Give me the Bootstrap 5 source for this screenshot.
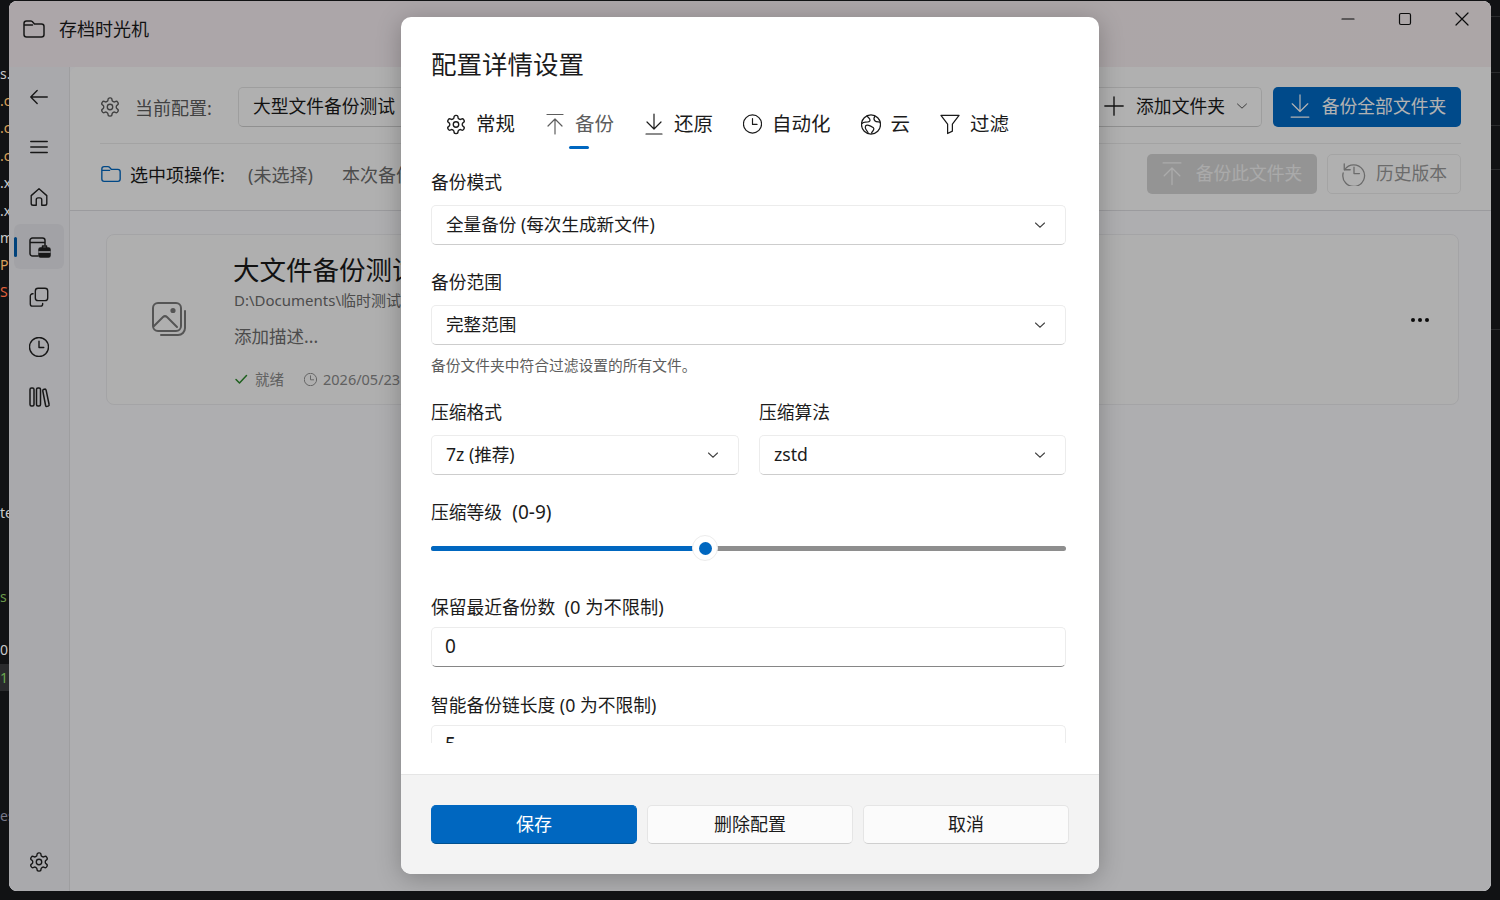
<!DOCTYPE html>
<html lang="zh-CN">
  <head>
    <meta charset="UTF-8" />
    <title>存档时光机</title>
    <link href="https://cdn.jsdelivr.net/npm/bootstrap@5.3.0/dist/css/bootstrap.min.css" rel="stylesheet" />
    <style>
      html, body { height: 900px; overflow: hidden; }
      body {
        background: #111214;
        font-family: "Noto Sans", "Noto Sans CJK SC", sans-serif;
        font-size: 17.75px;
        color: #1b1b1b;
      }
      svg.ico { fill: none; stroke: currentColor; stroke-width: 1.5; stroke-linecap: round; stroke-linejoin: round; flex: none; }

      /* desktop behind the window */
      .desk { height: 900px; padding: 1px 9px 9px 9px; position: relative; }
      .stray { position: absolute; left: 0; width: 9px; overflow: hidden; font: 14px/18px "Noto Sans", sans-serif; white-space: nowrap; color: #c9c9c9; }
      .stray-row { background: #2a2b2d; width: 9px; height: 27px; line-height: 27px; }
      .edge-line { position: absolute; right: 0; width: 9px; height: 1px; background: #2a2b2d; }

      /* app window */
      .app-win { height: 890px; position: relative; overflow: hidden; border-radius: 8px; background: #f9f9fd; }
      .app-title { height: 66px; background: linear-gradient(90deg, #f7eef3, #f6eef0); padding: 0 0 10px 13px; font-size: 18px; gap: 13px; }
      .win-btns { gap: 37px; padding: 8px 19px 0 0; align-self: flex-start; }
      .app-body { height: 824px; }
      .side-rail { width: 61px; background: #f2f2f7; border-right: 1px solid #e2e2e6; padding: 7px 5px 7px; }
      .rail-btn { height: 45px; margin-bottom: 5px; border-radius: 6px; position: relative; display: flex; align-items: center; justify-content: center; color: #222; }
      .rail-btn.on { background: #e9e9ee; }
      .rail-btn.on::before { content: ""; position: absolute; left: 0; top: 13px; width: 3px; height: 20px; border-radius: 2px; background: #005fb0; }
      .main-pane { background: #f9f9fc; }
      .tool-panel { background: #fdfdfd; height: 144px; padding: 20px 30px; border-bottom: 1px solid #dfdfe3; border-top-left-radius: 8px; }
      .tool-row { height: 40px; }
      .tool-text { font-size: 18px; padding-top: 2px; }
      .tool-sep { height: 1px; background: #eaeaea; margin: 16px 0 10px; }
      .cur-cfg { width: 700px; height: 40px; border: 1px solid #e3e3e3; border-bottom-color: #cfcfcf; border-radius: 5px; background: #fdfdfd; padding-left: 14px; line-height: 36px; }
      .btn-win { height: 40px; border-radius: 5px; font-size: 17.8px; padding: 0 0 2px; display: flex; align-items: center; justify-content: center; }
      .btn-add { width: 210px; background: #fefefe; border: 1px solid #e3e3e3; border-bottom-color: #cfcfcf; color: #1b1b1b; padding: 0 13px 2px 0; justify-content: flex-end; gap: 10px; margin-left: -50px; }
      .btn-add svg:first-child { margin-right: 1px; }
      .btn-add svg:last-child { margin-left: 1px; }
      .btn-all { width: 188px; background: #006ac6; color: #fff; gap: 12px; padding-left: 2px; margin-left: 3px; }
      .btn.btn-one:disabled { width: 170px; background: #d5d5d5; color: rgba(255, 255, 255, .75); gap: 14px; border: 0; opacity: 1; }
      .btn-hist { width: 134px; background: #fdfdfd; color: #9a9a9a; border: 1px solid #ebebeb; gap: 9px; }
      .file-card { margin: 23px 32px 0 36px; height: 171px; background: #fbfbfb; border: 1px solid #ebebee; border-radius: 8px; }
      .card-thumb { width: 127px; color: #7a7a7a; margin-top: -1px; padding-right: 3px; }
      .card-name { font-size: 26.5px; line-height: 36px; white-space: nowrap; margin: 2px 0 0 -1px; }
      .card-path { font-size: 15px; line-height: 20px; color: #6d6d6d; margin-top: 2px; }
      .card-desc { font-size: 17.5px; line-height: 24px; color: #6d6d6d; margin-top: 14px; }
      .card-meta { font-size: 14.5px; color: #8a8a8a; margin-top: 21px; line-height: 20px; }
      .more-dots { padding-right: 29px; gap: 3px; }
      .more-dots i { width: 4px; height: 4px; background: #111; border-radius: 50%; display: block; }

      /* dialog */
      .dim-layer { position: absolute; inset: 0; background: rgba(0, 0, 0, 0.3); display: flex; justify-content: center; padding-top: 16px; }
      .cfg-dialog { width: 698px; height: 857px; border: 0; border-radius: 10px; overflow: hidden; background: #fff; flex: none; box-shadow: 0 4px 24px rgba(0,0,0,.25); }
      .cfg-scroll { height: 726px; margin-bottom: 31px; overflow: hidden; padding: 0 33px 0 30px; flex: none; }
      .cfg-title { font-size: 25.5px; line-height: 36px; margin: 29px 0 22px; font-weight: 400; }
      .cfg-tabs { height: 46px; margin-bottom: 19px; }
      .cfg-tabs .nav-link { padding: 0 15px; gap: 10px; display: flex; align-items: center; height: 40px; font-size: 19.5px; color: #1b1b1b; position: relative; }
      .cfg-tabs .nav-link.on { color: #5d5d5d; }
      .cfg-tabs .nav-link.on::after { content: ""; position: absolute; left: 39px; top: 42px; width: 20px; height: 3px; border-radius: 2px; background: #0067c0; }
      .cfg-label { display: block; font-size: 17.75px; line-height: 24px; padding-top: 1px; margin-bottom: 11px; }
      .cfg-label.tight { margin-bottom: 8px; }
      .cfg-note { font-size: 19px; margin-left: 1px; }
      .cfg-note-b { font-size: 18.25px; }
      .cfg-col-a { flex: 0 0 308px; margin-right: 20px; }
      .cfg-select.form-select, .cfg-input.form-control {
        height: 40px; border-radius: 5px; border: 1px solid #ececec; border-bottom-color: #cdcdcd;
        font-size: 17.6px; padding: 0 14px 2px; color: #1b1b1b; background-color: #fff; box-shadow: none;
      }
      .cfg-select.form-select {
        background-image: url("data:image/svg+xml,%3csvg xmlns='http://www.w3.org/2000/svg' viewBox='0 0 12 8'%3e%3cpath fill='none' stroke='%23444' stroke-width='1.1' stroke-linecap='round' d='M1.5 2 6 6.2 10.5 2'/%3e%3c/svg%3e");
        background-size: 12px 8px; background-position: right 19px center;
      }
      .cfg-input.form-control { border-bottom-color: #868686; font-size: 19px; padding: 0 13px 3px; }
      .cfg-hint { font-size: 14.75px; line-height: 20px; color: #5d5d5d; margin: 10px 0 0; }
      .lvl-track { height: 5px; position: relative; margin: 22px 0 0; background: #8e8e8e; border-radius: 3px; }
      .lvl-fill { height: 5px; background: #0067c0; border-radius: 3px 0 0 3px; }
      .lvl-thumb { position: absolute; top: -11px; width: 26px; height: 26px; margin-left: -13px; background: #fff; border: 1px solid #ececec; border-radius: 50%; display: flex; align-items: center; justify-content: center; }
      .lvl-thumb i { width: 13px; height: 13px; border-radius: 50%; background: #0067c0; display: block; }
      .cfg-foot { height: 100px; background: #f3f3f3; border-top: 1px solid #e5e5e5; padding: 30px 30px 0; gap: 10px; flex: none; align-items: flex-start; }
      .foot-btn { width: 206px; height: 39px; border-radius: 5px; font-size: 18px; padding: 0; line-height: 37px; background: #fbfbfb; border: 1px solid #e5e5e5; border-bottom-color: #cfcfcf; color: #1b1b1b; }
      .foot-btn.go { background: #0067c0; border-color: #0067c0; border-bottom-color: #00508f; color: #fff; }
    </style>
  </head>
  <body>
    <svg width="0" height="0" class="position-absolute">
      <symbol id="i-gear" viewBox="1 1 22 22"><path d="M12.22 2h-.44a2 2 0 0 0-2 2v.18a2 2 0 0 1-1 1.73l-.43.25a2 2 0 0 1-2 0l-.15-.08a2 2 0 0 0-2.73.73l-.22.38a2 2 0 0 0 .73 2.73l.15.1a2 2 0 0 1 1 1.72v.51a2 2 0 0 1-1 1.74l-.15.09a2 2 0 0 0-.73 2.73l.22.38a2 2 0 0 0 2.73.73l.15-.08a2 2 0 0 1 2 0l.43.25a2 2 0 0 1 1 1.73V20a2 2 0 0 0 2 2h.44a2 2 0 0 0 2-2v-.18a2 2 0 0 1 1-1.73l.43-.25a2 2 0 0 1 2 0l.15.08a2 2 0 0 0 2.73-.73l.22-.39a2 2 0 0 0-.73-2.73l-.15-.08a2 2 0 0 1-1-1.74v-.5a2 2 0 0 1 1-1.74l.15-.09a2 2 0 0 0 .73-2.73l-.22-.38a2 2 0 0 0-2.73-.73l-.15.08a2 2 0 0 1-2 0l-.43-.25a2 2 0 0 1-1-1.73V4a2 2 0 0 0-2-2z"/><circle cx="12" cy="12" r="3"/></symbol>
      <symbol id="i-up" viewBox="3 1 18 22"><path d="M4 2.500h16M12 7v15M5 14l7-7 7 7"/></symbol>
      <symbol id="i-down" viewBox="3 1 18 22"><path d="M12 2v15M5 10l7 7 7-7M4 22h16"/></symbol>
      <symbol id="i-clock" viewBox="1.500 1.500 21 21"><circle cx="12" cy="12" r="10"/><path d="M12 6v6.500h5"/></symbol>
      <symbol id="i-globe" viewBox="1.500 1.500 21 21"><circle cx="12" cy="12" r="10"/><path d="M8 3c1 2 3 2.500 3 4.500S8 9.500 6 9.500 2.500 11 2.500 11M16 3.500c-1 1.500-1.500 3 0 4.500s4 1 5.500 1.500M9 21c-.5-2.500-3-3-3-6s3-2.500 5-1.500 4 1 4 3-2 3-2.500 4.500"/></symbol>
      <symbol id="i-filter" viewBox="1.500 2 21 21"><path d="M2.500 3h19l-7 9v7.500l-5 2.500V12z"/></symbol>
      <symbol id="i-folder" viewBox="0 0 24 24"><path d="M2 6.500A2.500 2.500 0 0 1 4.500 4h4.300c.5 0 1 .2 1.400.5L12.500 7h7A2.500 2.500 0 0 1 22 9.500v8a2.500 2.500 0 0 1-2.500 2.500h-15A2.500 2.500 0 0 1 2 17.500zM2 8h8.500"/></symbol>
      <symbol id="i-pic" viewBox="0 0 34 34"><rect x="1" y="1" width="28" height="28" rx="5"/><path d="M33 9v17a7 7 0 0 1-7 7H9"/><path d="M2 24l9-9a3 3 0 0 1 4 0l10 10"/><circle cx="21" cy="8.500" r="1.600" fill="currentColor"/></symbol>
    </svg>

    <div class="desk">
      <span class="stray" style="top: 65px">s.</span>
      <span class="stray" style="top: 92px; color: #d9a05b">.c</span>
      <span class="stray" style="top: 119px; color: #d9a05b">.c</span>
      <span class="stray" style="top: 147px; color: #d9a05b">.c</span>
      <span class="stray" style="top: 174px">.x</span>
      <span class="stray" style="top: 202px">.x</span>
      <span class="stray" style="top: 229px">m</span>
      <span class="stray" style="top: 256px; color: #d9a05b">Pl</span>
      <span class="stray" style="top: 283px; color: #e0603c">Si</span>
      <span class="stray" style="top: 504px">te</span>
      <span class="stray" style="top: 588px; color: #6a9a4a">s</span>
      <span class="stray" style="top: 641px">0</span>
      <span class="stray stray-row" style="top: 664px; color: #6aa84f">1</span>
      <span class="stray" style="top: 807px; color: #778">es</span>
      <i class="edge-line" style="top: 16px"></i>
      <i class="edge-line" style="top: 72px"></i>
      <i class="edge-line" style="top: 125px"></i>
      <i class="edge-line" style="top: 169px"></i>
      <i class="edge-line" style="top: 329px"></i>

      <div class="app-win">
        <div class="app-title d-flex align-items-center">
          <svg class="ico" width="24" height="24" style="color:#222"><use href="#i-folder" /></svg>
          <span>存档时光机</span>
          <div class="win-btns ms-auto d-flex align-items-center">
            <svg class="ico" width="20" height="20" viewBox="0 0 20 20" style="color:#111;stroke-width:1.2"><path d="M4 10h12" /></svg>
            <svg class="ico" width="20" height="20" viewBox="0 0 20 20" style="color:#111;stroke-width:1.2"><rect x="4.500" y="4.500" width="11" height="11" rx="1.500" /></svg>
            <svg class="ico" width="20" height="20" viewBox="0 0 20 20" style="color:#111;stroke-width:1.2"><path d="M4 4l12 12M16 4L4 16" /></svg>
          </div>
        </div>
        <div class="app-body d-flex">
          <div class="side-rail d-flex flex-column">
            <div class="rail-btn"><svg class="ico" width="22" height="22" viewBox="0 0 24 24"><path d="M21 12H3M10 5l-7 7 7 7" /></svg></div>
            <div class="rail-btn"><svg class="ico" width="22" height="22" viewBox="0 0 24 24"><path d="M3 6h18M3 12h18M3 18h18" /></svg></div>
            <div class="rail-btn"><svg class="ico" width="22" height="22" viewBox="0 0 24 24"><path d="M3.500 10.500 12 3l8.500 7.500V19a2 2 0 0 1-2 2H15v-6a2 2 0 0 0-2-2h-2a2 2 0 0 0-2 2v6H5.500a2 2 0 0 1-2-2z" /></svg></div>
            <div class="rail-btn on"><svg class="ico" width="24" height="24" viewBox="0 0 24 24"><path d="M11 21H5.500A2.500 2.500 0 0 1 3 18.500v-13A2.500 2.500 0 0 1 5.500 3h10A2.500 2.500 0 0 1 18 5.500V10M3 7.500h15" /><rect x="12" y="13" width="11" height="9" rx="1.500" fill="currentColor" /><path d="M15.500 13v-2h4v2" /><path d="M12 17h11" stroke="#e9e9ee" /></svg></div>
            <div class="rail-btn"><svg class="ico" width="22" height="22" viewBox="0 0 24 24"><rect x="8" y="2.500" width="13.500" height="13.500" rx="3" /><path d="M16 19v.5a2.500 2.500 0 0 1-2.500 2.500H5a2.500 2.500 0 0 1-2.500-2.500V11A2.500 2.500 0 0 1 5 8.500h.5" /></svg></div>
            <div class="rail-btn"><svg class="ico" width="20" height="20"><use href="#i-clock" /></svg></div>
            <div class="rail-btn"><svg class="ico" width="24" height="24" viewBox="0 0 24 24"><rect x="3" y="3" width="4" height="18" rx="1.500" /><rect x="9.500" y="3" width="4" height="18" rx="1.500" /><path d="M16.500 4.500l1-.3a1.300 1.300 0 0 1 1.600.9l3 14.400a1.300 1.300 0 0 1-.9 1.600l-1 .3a1.300 1.300 0 0 1-1.600-.9L15.800 6a1.300 1.300 0 0 1 .7-1.500z" /></svg></div>
            <div class="rail-btn mt-auto mb-0"><svg class="ico" width="20" height="20"><use href="#i-gear" /></svg></div>
          </div>
          <div class="main-pane flex-grow-1">
            <div class="tool-panel">
              <div class="tool-row d-flex align-items-center">
                <svg class="ico" width="20" height="20" style="color:#5d5d5d"><use href="#i-gear" /></svg>
                <span class="tool-text" style="color:#5d5d5d;width:103px;margin-left:15px">当前配置:</span>
                <div class="cur-cfg">大型文件备份测试</div>
                <div class="ms-auto d-flex gap-2">
                  <button class="btn btn-win btn-add" type="button">
                    <svg class="ico" width="22" height="22" viewBox="0 0 24 24"><path d="M12 2v20M2 12h20" /></svg>
                    <span>添加文件夹</span>
                    <svg class="ico" width="12" height="8" viewBox="0 0 12 8" style="stroke-width:1;color:#555"><path d="M1.500 2 6 6.200 10.500 2" /></svg>
                  </button>
                  <button class="btn btn-win btn-all" type="button">
                    <svg class="ico" width="20" height="26" style="stroke-width:1.100"><use href="#i-down" /></svg>
                    <span>备份全部文件夹</span>
                  </button>
                </div>
              </div>
              <div class="tool-sep"></div>
              <div class="tool-row d-flex align-items-center">
                <svg class="ico" width="22" height="22" style="color:#0067c0"><use href="#i-folder" /></svg>
                <span class="tool-text ms-2" style="width:118px">选中项操作:</span>
                <span class="tool-text" style="color:#6d6d6d;width:94px">(未选择)</span>
                <span class="tool-text" style="color:#6d6d6d">本次备份</span>
                <div class="ms-auto d-flex" style="gap:10px">
                  <button class="btn btn-win btn-one" type="button" disabled>
                    <svg class="ico" width="20" height="25" style="stroke-width:1.200"><use href="#i-up" /></svg>
                    <span>备份此文件夹</span>
                  </button>
                  <button class="btn btn-win btn-hist" type="button">
                    <svg class="ico" width="26" height="26" viewBox="0 0 24 24" style="stroke-width:1.200"><path d="M3 3.500V9h5.500" /><path d="M3.300 9A10 10 0 1 1 2 12" /><path d="M12 6.500V12.500h5" /></svg>
                    <span>历史版本</span>
                  </button>
                </div>
              </div>
            </div>
            <div class="file-card d-flex align-items-center">
              <div class="card-thumb d-flex justify-content-center">
                <svg class="ico" width="34" height="34" viewBox="0 0 34 34" style="stroke-width:2"><use href="#i-pic" /></svg>
              </div>
              <div>
                <div class="card-name">大文件备份测试</div>
                <div class="card-path">D:\Documents\临时测试\大文件</div>
                <div class="card-desc">添加描述...</div>
                <div class="card-meta d-flex align-items-center">
                  <svg class="ico" width="14" height="14" viewBox="0 0 14 14" style="color:#2c8a2c"><path d="M2 7.500 5.500 11 12.500 3.500" /></svg>
                  <span style="margin-left:7px">就绪</span>
                  <svg class="ico" width="13" height="13" style="margin-left:20px"><use href="#i-clock" /></svg>
                  <span style="margin-left:6px">2026/05/23 10:42</span>
                </div>
              </div>
              <div class="more-dots ms-auto d-flex"><i></i><i></i><i></i></div>
            </div>
          </div>
        </div>

        <div class="dim-layer">
          <div class="cfg-dialog modal-content d-flex flex-column">
            <div class="cfg-scroll">
              <h5 class="cfg-title">配置详情设置</h5>
              <nav class="nav cfg-tabs">
                <a class="nav-link" href="#"><svg class="ico" width="20" height="21"><use href="#i-gear" /></svg>常规</a>
                <a class="nav-link on" href="#"><svg class="ico" width="20" height="22" style="stroke-width:1.200"><use href="#i-up" /></svg>备份</a>
                <a class="nav-link" href="#"><svg class="ico" width="20" height="22" style="stroke-width:1.200"><use href="#i-down" /></svg>还原</a>
                <a class="nav-link" href="#"><svg class="ico" width="19" height="20" style="stroke-width:1.300"><use href="#i-clock" /></svg>自动化</a>
                <a class="nav-link" href="#"><svg class="ico" width="20" height="21" style="stroke-width:1.300"><use href="#i-globe" /></svg>云</a>
                <a class="nav-link" href="#"><svg class="ico" width="20" height="21" style="stroke-width:1.300"><use href="#i-filter" /></svg>过滤</a>
              </nav>
              <label class="cfg-label">备份模式</label>
              <select class="form-select cfg-select"><option>全量备份 (每次生成新文件)</option></select>
              <label class="cfg-label" style="margin-top:24px">备份范围</label>
              <select class="form-select cfg-select"><option>完整范围</option></select>
              <p class="cfg-hint">备份文件夹中符合过滤设置的所有文件。</p>
              <div class="row g-0" style="margin-top:24px">
                <div class="col cfg-col-a">
                  <label class="cfg-label">压缩格式</label>
                  <select class="form-select cfg-select"><option>7z (推荐)</option></select>
                </div>
                <div class="col">
                  <label class="cfg-label">压缩算法</label>
                  <select class="form-select cfg-select"><option>zstd</option></select>
                </div>
              </div>
              <label class="cfg-label" style="margin-top:24px">压缩等级&nbsp;&nbsp;<span class="cfg-note">(0-9)</span></label>
              <div class="lvl-track">
                <div class="lvl-fill" style="width: 43.15%"></div>
                <div class="lvl-thumb" style="left: 43.15%"><i></i></div>
              </div>
              <label class="cfg-label tight" style="margin-top:43px">保留最近备份数&nbsp;&nbsp;<span class="cfg-note-b">(0 为不限制)</span></label>
              <input class="form-control cfg-input" type="text" value="0" />
              <label class="cfg-label tight" style="margin-top:25px">智能备份链长度 (0 为不限制)</label>
              <input class="form-control cfg-input" type="text" value="5" />
            </div>
            <div class="cfg-foot d-flex">
              <button class="btn foot-btn go" type="button">保存</button>
              <button class="btn foot-btn" type="button">删除配置</button>
              <button class="btn foot-btn" type="button">取消</button>
            </div>
          </div>
        </div>
      </div>
    </div>
    <script src="https://cdn.jsdelivr.net/npm/bootstrap@5.3.0/dist/js/bootstrap.bundle.min.js"></script>
  </body>
</html>
